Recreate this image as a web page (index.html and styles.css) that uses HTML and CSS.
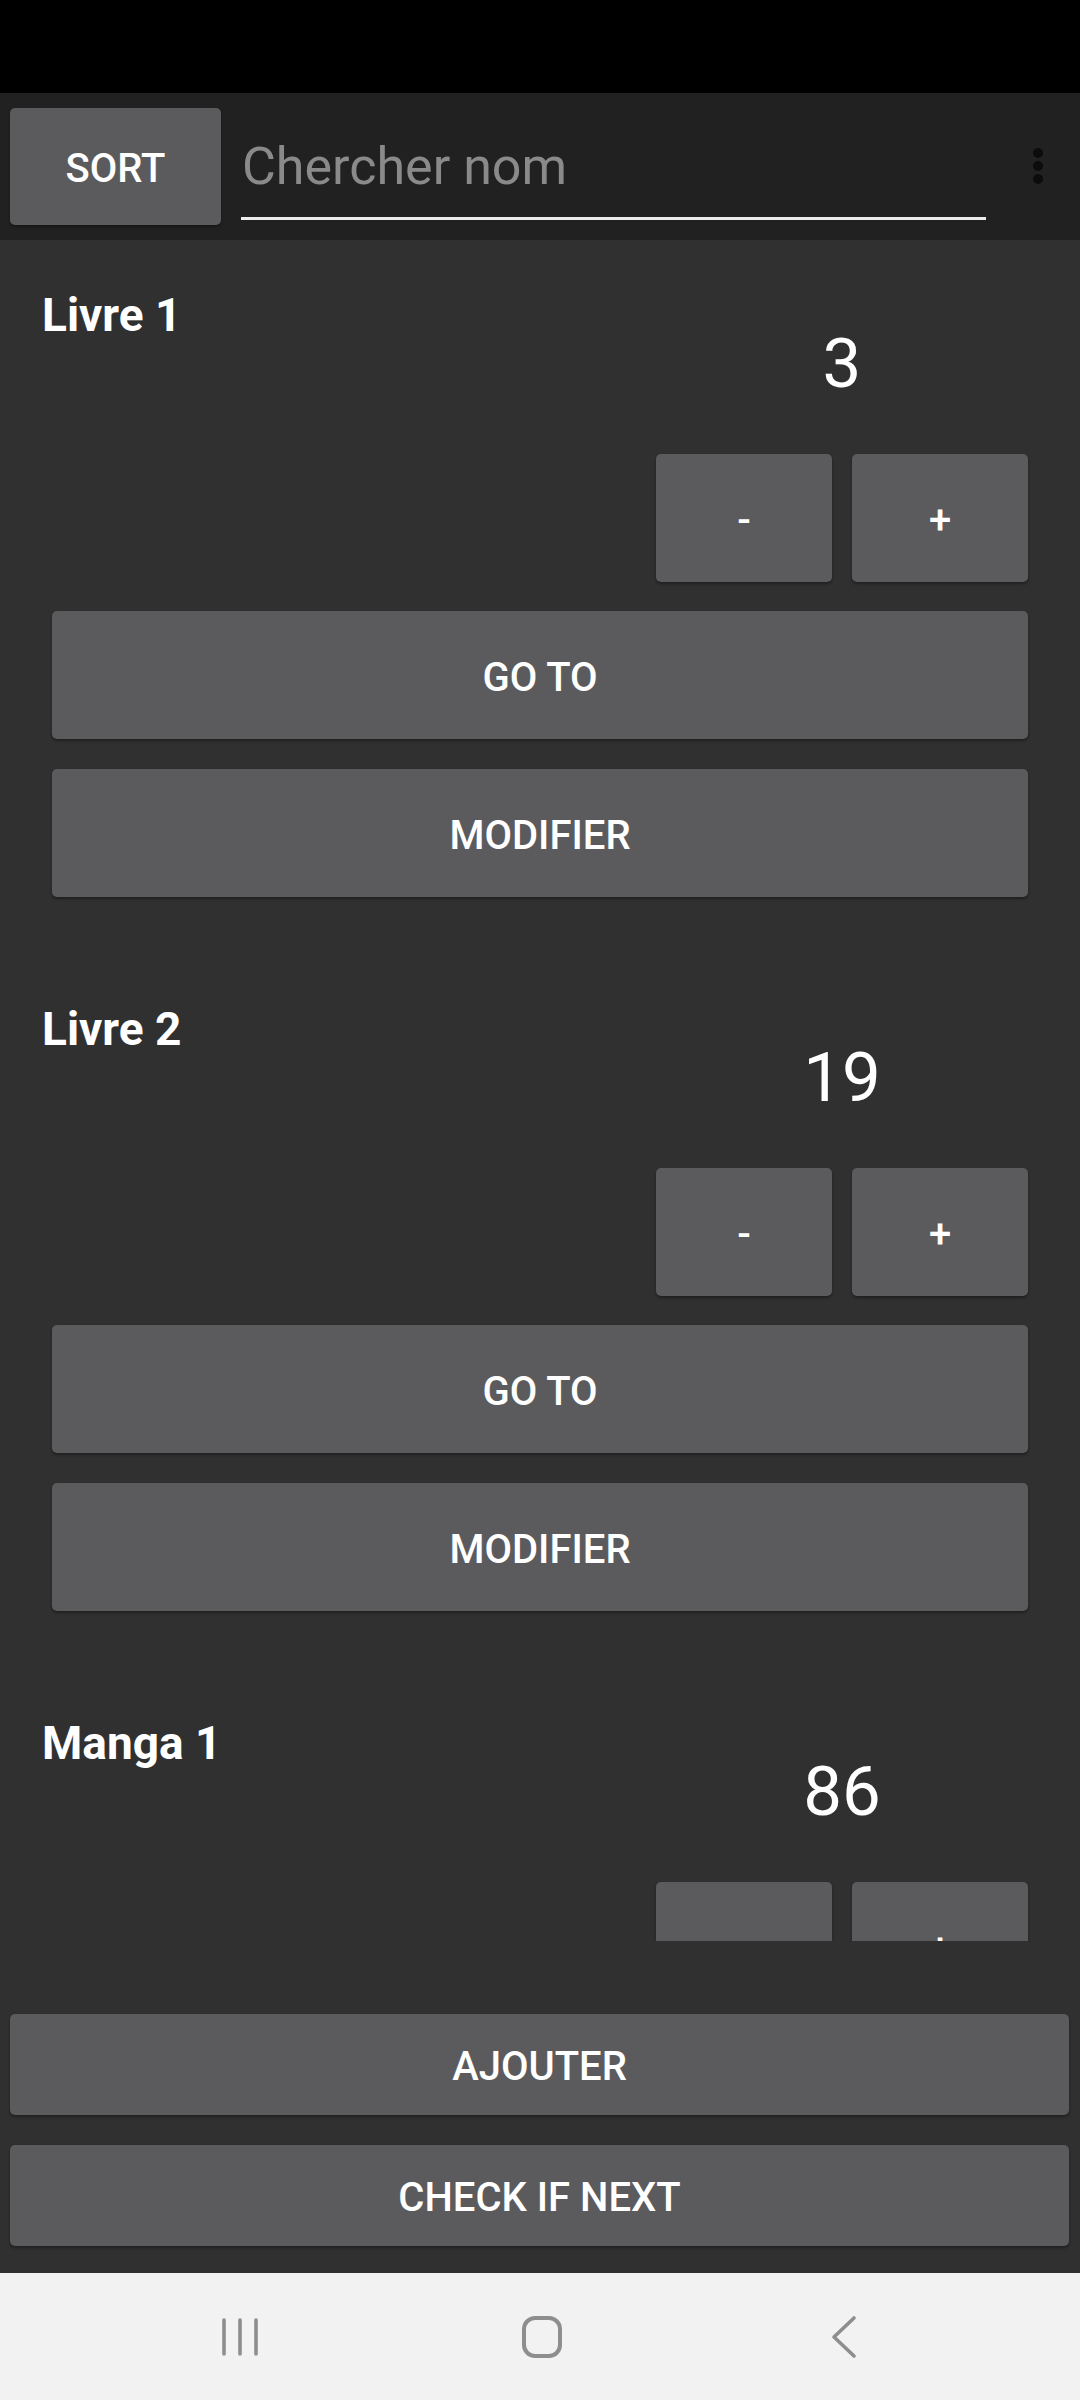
FILE: index.html
```html
<!DOCTYPE html>
<html lang="fr">
<head>
<meta charset="utf-8">
<title>Liste</title>
<link rel="stylesheet" href="styles.css">
</head>
<body>
<div class="screen">
  <div class="status-bar"></div>
  <div class="toolbar">
    <button class="btn sort-btn">SORT</button>
    <div class="search">Chercher nom</div>
    <svg class="overflow" width="10" height="36" viewBox="0 0 10 36">
      <circle cx="5" cy="5" r="5"/>
      <circle cx="5" cy="18" r="5"/>
      <circle cx="5" cy="31" r="5"/>
    </svg>
  </div>
  <div class="list">
    <div class="item">
      <div class="item-head">
        <div class="item-title">Livre 1</div>
        <div class="item-count">3</div>
      </div>
      <div class="counter-row">
        <button class="btn small-btn">-</button>
        <button class="btn small-btn">+</button>
      </div>
      <button class="btn wide-btn goto">GO TO</button>
      <button class="btn wide-btn modify">MODIFIER</button>
    </div>
    <div class="item">
      <div class="item-head">
        <div class="item-title">Livre 2</div>
        <div class="item-count">19</div>
      </div>
      <div class="counter-row">
        <button class="btn small-btn">-</button>
        <button class="btn small-btn">+</button>
      </div>
      <button class="btn wide-btn goto">GO TO</button>
      <button class="btn wide-btn modify">MODIFIER</button>
    </div>
    <div class="item">
      <div class="item-head">
        <div class="item-title">Manga 1</div>
        <div class="item-count">86</div>
      </div>
      <div class="counter-row">
        <button class="btn small-btn">-</button>
        <button class="btn small-btn">+</button>
      </div>
    </div>
  </div>
  <div class="bottom-actions">
    <button class="btn action-btn">AJOUTER</button>
    <button class="btn action-btn">CHECK IF NEXT</button>
  </div>
  <div class="nav-bar">
    <svg class="nav-icon" width="40" height="40" viewBox="0 0 40 40">
      <path d="M4 3 V37 M20 3 V37 M36 3 V37" fill="none" stroke="#8e8e8e" stroke-width="3.6" stroke-linecap="round"/>
    </svg>
    <svg class="nav-icon" width="42" height="44" viewBox="0 0 42 44">
      <rect x="3" y="3" width="36" height="38" rx="11" fill="none" stroke="#8e8e8e" stroke-width="4"/>
    </svg>
    <svg class="nav-icon" width="28" height="44" viewBox="0 0 28 44">
      <polyline points="24,3 4,22 24,41" fill="none" stroke="#8e8e8e" stroke-width="3.6" stroke-linecap="round" stroke-linejoin="round"/>
    </svg>
  </div>
</div>
</body>
</html>
```

FILE: styles.css
```css
html, body {
  margin: 0;
  padding: 0;
}

body {
  background: #303030;
  font-family: Roboto, "Noto Sans", "Liberation Sans", sans-serif;
  color: #ffffff;
}

.screen {
  width: 1080px;
  height: 2400px;
  display: flex;
  flex-direction: column;
  overflow: hidden;
}

.status-bar {
  height: 93px;
  background: #000000;
  flex: none;
}

.toolbar {
  height: 147px;
  flex: none;
  background: #212121;
  display: flex;
  align-items: flex-start;
  box-sizing: border-box;
  padding-left: 10px;
}

.btn {
  border: none;
  margin: 0;
  padding: 4px 0 0 0;
  box-sizing: border-box;
  background: #5b5b5d;
  color: #ffffff;
  font-family: Roboto, "Noto Sans", "Liberation Sans", sans-serif;
  font-weight: 500;
  font-size: 40px;
  letter-spacing: 0;
  border-radius: 5px;
  box-shadow: 0 2px 3px rgba(0, 0, 0, 0.35);
  display: flex;
  align-items: center;
  justify-content: center;
}

.sort-btn {
  width: 211px;
  height: 117px;
  margin-top: 15px;
}

.search {
  width: 745px;
  margin-top: 43px;
  margin-left: 20px;
  font-size: 52px;
  line-height: 61px;
  color: #8a8a8a;
  padding-bottom: 20px;
  border-bottom: 3px solid #ececec;
  padding-left: 1px;
  box-sizing: border-box;
  height: 84px;
}

.overflow {
  margin-top: 55px;
  margin-left: 47px;
  fill: #0c0c0c;
}

.list {
  height: 1701px;
  flex: none;
  overflow: hidden;
}

.item {
  height: 714px;
  box-sizing: border-box;
  display: flex;
  flex-direction: column;
  padding-left: 52px;
  padding-right: 52px;
}

.item-head {
  display: flex;
  height: 164px;
}

.item-title {
  margin-left: -10px;
  padding-top: 48px;
  font-size: 46px;
  line-height: 54px;
  font-weight: 700;
}

.item-count {
  margin-left: auto;
  width: 372px;
  text-align: center;
  padding-top: 83px;
  font-size: 69px;
  line-height: 81px;
  font-weight: 400;
}

.counter-row {
  margin-top: 50px;
  display: flex;
  justify-content: flex-end;
  gap: 20px;
}

.small-btn {
  width: 176px;
  height: 128px;
}

.wide-btn {
  width: 976px;
  height: 128px;
}

.goto {
  margin-top: 29px;
}

.modify {
  margin-top: 30px;
}

.bottom-actions {
  flex: none;
  height: 332px;
  box-sizing: border-box;
  padding: 73px 11px 0 10px;
  display: flex;
  flex-direction: column;
  gap: 30px;
}

.action-btn {
  width: 1059px;
  height: 101px;
}

.nav-bar {
  flex: none;
  height: 127px;
  background: #f2f2f2;
  display: grid;
  grid-template-columns: 302px 302px 302px;
  padding-left: 89px;
  justify-items: center;
  align-items: center;
}

.nav-icon {
  display: block;
}
```
